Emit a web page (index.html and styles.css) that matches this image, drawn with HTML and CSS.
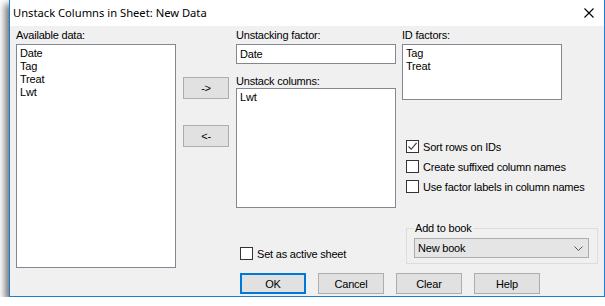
FILE: index.html
```html
<!DOCTYPE html>
<html lang="en">
<head>
    <meta charset="UTF-8">
    <meta name="viewport" content="width=device-width, initial-scale=1.0">
    <title>Unstack Columns in Sheet</title>
    <link rel="stylesheet" href="styles.css">
</head>
<body>
    <div class="window">
        <div class="titlebar">
            <span class="title">Unstack Columns in Sheet: New Data</span>
            <svg class="close" width="10" height="10" viewBox="0 0 10 10">
                <path d="M0.5 0.5 L9.5 9.5 M9.5 0.5 L0.5 9.5" stroke="#000" stroke-width="1.1" fill="none"/>
            </svg>
        </div>
        <div class="client">
            <div class="panes">
                <div class="col col-data">
                    <div class="caption">Available data:</div>
                    <ul class="listbox listbox-data">
                        <li>Date</li>
                        <li>Tag</li>
                        <li>Treat</li>
                        <li>Lwt</li>
                    </ul>
                </div>
                <div class="col col-move">
                    <button class="btn btn-move">-&gt;</button>
                    <button class="btn btn-move">&lt;-</button>
                </div>
                <div class="col col-factor">
                    <div class="caption">Unstacking factor:</div>
                    <div class="textbox">Date</div>
                    <div class="caption caption-gap">Unstack columns:</div>
                    <ul class="listbox listbox-columns">
                        <li>Lwt</li>
                    </ul>
                    <label class="check check-active"><span class="box"></span>Set as active sheet</label>
                </div>
                <div class="col col-id">
                    <div class="caption">ID factors:</div>
                    <ul class="listbox listbox-id">
                        <li>Tag</li>
                        <li>Treat</li>
                    </ul>
                    <div class="options">
                        <label class="check">
                            <span class="box">
                                <svg width="11" height="11" viewBox="0 0 11 11">
                                    <path d="M1.5 5.5 L4.2 8.3 L9.6 1.8" stroke="#333" stroke-width="1.1" fill="none"/>
                                </svg>
                            </span>Sort rows on IDs
                        </label>
                        <label class="check"><span class="box"></span>Create suffixed column names</label>
                        <label class="check"><span class="box"></span>Use factor labels in column names</label>
                    </div>
                    <fieldset class="group">
                        <legend>Add to book</legend>
                        <div class="combo">
                            <span>New book</span>
                            <svg width="9" height="5" viewBox="0 0 9 5">
                                <path d="M0.5 0.5 L4.5 4.5 L8.5 0.5" stroke="#555" stroke-width="1" fill="none"/>
                            </svg>
                        </div>
                    </fieldset>
                </div>
            </div>
            <div class="actions">
                <button class="btn btn-default">OK</button>
                <button class="btn">Cancel</button>
                <button class="btn">Clear</button>
                <button class="btn">Help</button>
            </div>
        </div>
    </div>
</body>
</html>
```

FILE: styles.css
```css
body {
    margin: 0;
    background: #fff;
    font-family: 'Liberation Sans', Arial, sans-serif;
    font-size: 11px;
    letter-spacing: -0.2px;
    color: #000;
}

.window {
    margin-left: 9px;
    width: 596px;
    box-sizing: border-box;
    border: 1px solid #1a7fd4;
    border-top: none;
    background: #f0f0f0;
    box-shadow: -4px 4px 7px rgba(0, 0, 0, 0.55);
}

.titlebar {
    height: 26px;
    background: #fff;
    display: flex;
    align-items: center;
    justify-content: space-between;
    padding: 0 10px 0 3px;
}

.title {
    font-family: 'Noto Sans', sans-serif;
    font-size: 11.2px;
    letter-spacing: 0;
    line-height: 26px;
}

.close {
    margin-top: -1px;
}

.client {
    padding: 2px 0 2px 6px;
}

.panes {
    display: flex;
    height: 240px;
}

.col {
    display: flex;
    flex-direction: column;
}

.caption {
    line-height: 14px;
    height: 14px;
    margin-bottom: 2px;
    white-space: nowrap;
}

.caption-gap {
    margin-top: 10px;
    margin-bottom: 0;
}

.listbox {
    list-style: none;
    margin: 0;
    padding: 2px 3px;
    background: #fff;
    border: 1px solid #828790;
    box-sizing: border-box;
}

.listbox li {
    line-height: 13px;
}

.col-data {
    width: 160px;
}

.listbox-data {
    height: 224px;
}

.col-move {
    width: 46px;
    margin-left: 7px;
    padding-top: 49px;
    gap: 26px;
}

.btn {
    font-family: 'Liberation Sans', Arial, sans-serif;
    font-size: 11px;
    letter-spacing: -0.2px;
    color: #000;
    background: #e1e1e1;
    border: 1px solid #adadad;
    padding: 0;
    box-sizing: border-box;
}

.btn-move {
    width: 46px;
    height: 22px;
}

.col-factor {
    width: 160px;
    margin-left: 7px;
}

.textbox {
    height: 20px;
    line-height: 18px;
    box-sizing: border-box;
    border: 1px solid #828790;
    background: #fff;
    padding-left: 3px;
}

.listbox-columns {
    height: 120px;
}

.check {
    display: flex;
    align-items: center;
    height: 13px;
    gap: 4px;
    white-space: nowrap;
}

.box {
    width: 13px;
    height: 13px;
    box-sizing: border-box;
    border: 1px solid #333;
    background: #fff;
    display: flex;
    align-items: center;
    justify-content: center;
}

.check-active {
    margin-top: 39px;
    margin-left: 4px;
}

.col-id {
    width: 196px;
    margin-left: 6px;
}

.listbox-id {
    width: 160px;
    height: 56px;
}

.options {
    display: flex;
    flex-direction: column;
    gap: 7px;
    margin-top: 40px;
    padding-left: 4px;
}

.group {
    margin: 28px 0 0 4px;
    padding: 3px 8px 5px 7px;
    border: 1px solid #dcdcdc;
    min-width: 0;
}

.group legend {
    padding: 0 1px;
    margin-left: 0;
    line-height: 14px;
}

.combo {
    height: 20px;
    box-sizing: border-box;
    border: 1px solid #adadad;
    background: #e5e5e5;
    display: flex;
    align-items: center;
    justify-content: space-between;
    padding: 0 5px 0 3px;
}

.actions {
    display: flex;
    gap: 12px;
    margin-top: 5px;
    padding-left: 224px;
}

.actions .btn {
    width: 66px;
    height: 21px;
}

.btn-default {
    border: 2px solid #0078d7;
}
```
